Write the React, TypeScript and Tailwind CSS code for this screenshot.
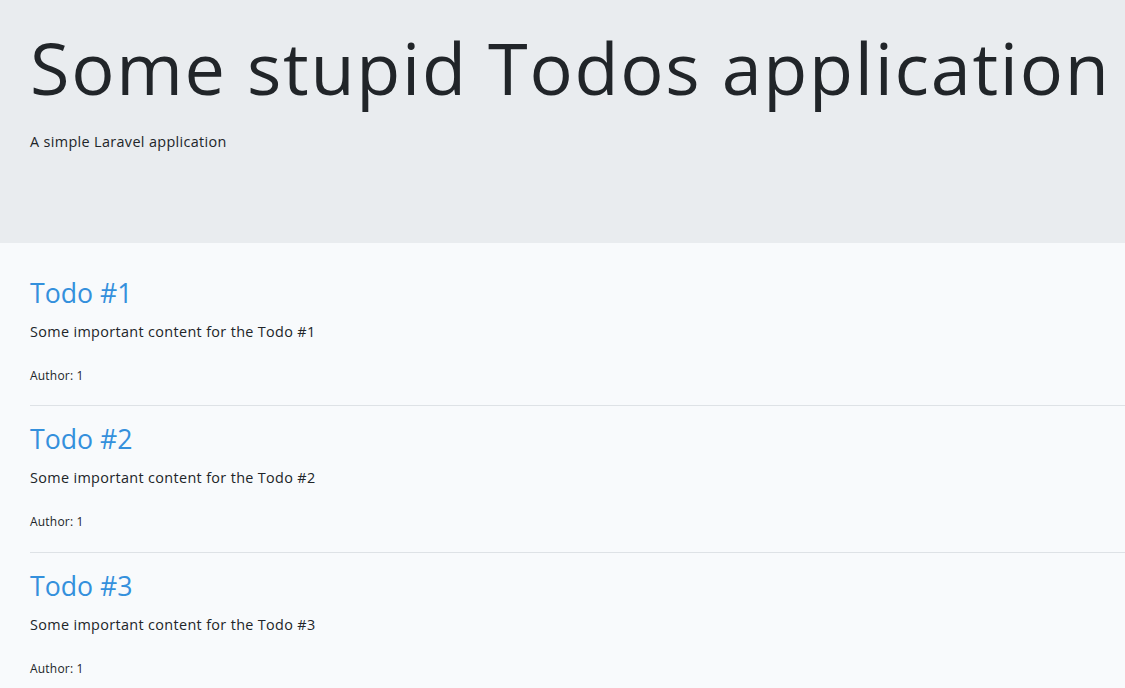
export default function App() {
  const todos = [1, 2, 3];
  return (
    <div className="min-h-[688px] bg-[#f8fafc] text-[#212529] [font-variant-ligatures:none]" style={{ fontFamily: "'Open Sans', 'Noto Sans', sans-serif" }}>
      <div className="bg-[#e9ecef] h-[243px] pl-[30px] pt-[24px] overflow-hidden">
        <h1 className="text-[72px] leading-[1.2] font-normal whitespace-nowrap tracking-[1.7px]">Some stupid Todos application</h1>
        <p className="mt-[20px] text-[14.4px] leading-[1.6] tracking-[0.35px]">A simple Laravel application</p>
      </div>
      <div className="pl-[30px] pt-[34px]">
        {todos.map((n) => (
          <div key={n} className="border-b border-[#dee2e6] pb-[20px] mb-[17px]">
            <h3 className="text-[26.7px] leading-[1.2] text-[#3490dc]">Todo #{n}</h3>
            <p className="mt-[11px] text-[14.4px] leading-[1.6] tracking-[0.35px]">Some important content for the Todo #{n}</p>
            <p className="mt-[23px] text-[12px] leading-[1.6] tracking-[0.2px]">Author: 1</p>
          </div>
        ))}
      </div>
    </div>
  );
}
